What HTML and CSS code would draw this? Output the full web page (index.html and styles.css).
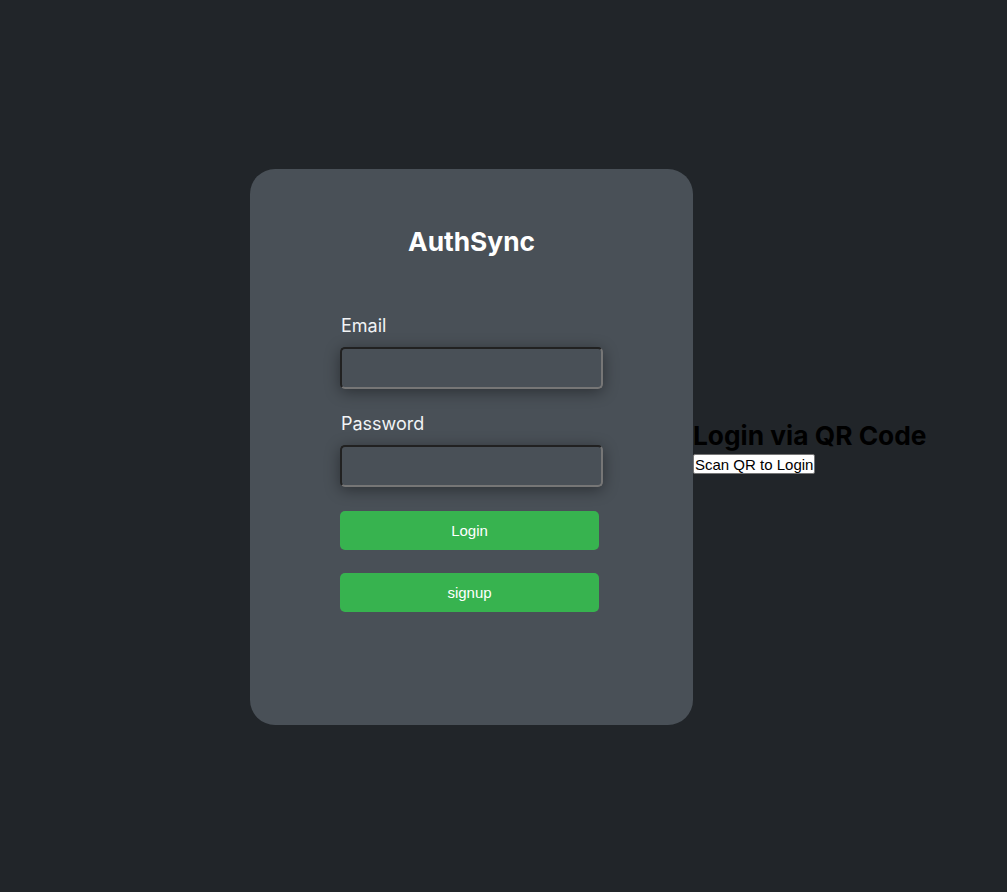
FILE: index.html
```html
<!DOCTYPE html>
<html lang="en">
<head>
<meta charset="utf-8">
<title>AuthSync</title>
<link rel="stylesheet" href="styles.css">
</head>
<body>
  <div class="card">
    <h1 class="title">AuthSync</h1>
    <form class="form">
      <label class="label" for="email">Email</label>
      <input class="input" id="email" type="email">
      <label class="label" for="password">Password</label>
      <input class="input" id="password" type="password">
      <button class="btn" type="button">Login</button>
      <button class="btn" type="button">signup</button>
    </form>
  </div>
  <div class="qr">
    <h2 class="qr-title">Login via QR Code</h2>
    <button class="qr-btn" type="button">Scan QR to Login</button>
  </div>
</body>
</html>
```

FILE: styles.css
```css
html, body {
  margin: 0;
  padding: 0;
}
body {
  box-sizing: border-box;
  height: 100vh;
  padding-top: 2px;
  background: #212529;
  font-family: Inter, "Noto Sans", sans-serif;
  display: flex;
  justify-content: center;
  align-items: center;
}
.card {
  box-sizing: border-box;
  width: 443px;
  height: 556px;
  flex: 0 0 443px;
  background: #495057;
  border-radius: 25px;
  padding: 57px 90px 0;
  color: #fff;
}
.title {
  margin: 0;
  font-size: 26.3px;
  line-height: 32px;
  font-weight: 700;
  text-align: center;
}
.form {
  display: flex;
  flex-direction: column;
  align-items: flex-start;
  margin-top: 57px;
}
.label {
  display: block;
  font-size: 18px;
  line-height: 22px;
  color: #f1f3f5;
  margin: 0 0 10px 1px;
}
.input {
  box-sizing: border-box;
  width: 263px;
  height: 42px;
  margin: 0 0 24px;
  background: #495057;
  border: 2px inset #767676;
  border-radius: 5px;
  box-shadow: 0 3px 15px rgba(0, 0, 0, 0.4);
  color: #fff;
  font-size: 16px;
  padding: 0 8px;
}
.btn {
  box-sizing: border-box;
  width: 259px;
  height: 39px;
  margin: 0 0 23px;
  background: #37b34f;
  color: #fff;
  border: none;
  border-radius: 5px;
  font-family: "Liberation Sans", Arial, sans-serif;
  font-size: 15px;
  cursor: pointer;
}
.qr {
  flex: 0 0 64px;
  width: 64px;
  white-space: nowrap;
  color: #000;
}
.qr-title {
  margin: 0;
  font-size: 26.3px;
  line-height: 32px;
  font-weight: 700;
}
.qr-btn {
  margin-top: 2px;
  background: #fff;
  color: #000;
  border: 1px solid #767676;
  border-radius: 2px;
  padding: 0 1px;
  height: 20px;
  font-family: "Liberation Sans", Arial, sans-serif;
  font-size: 15px;
  line-height: 17px;
}
```
